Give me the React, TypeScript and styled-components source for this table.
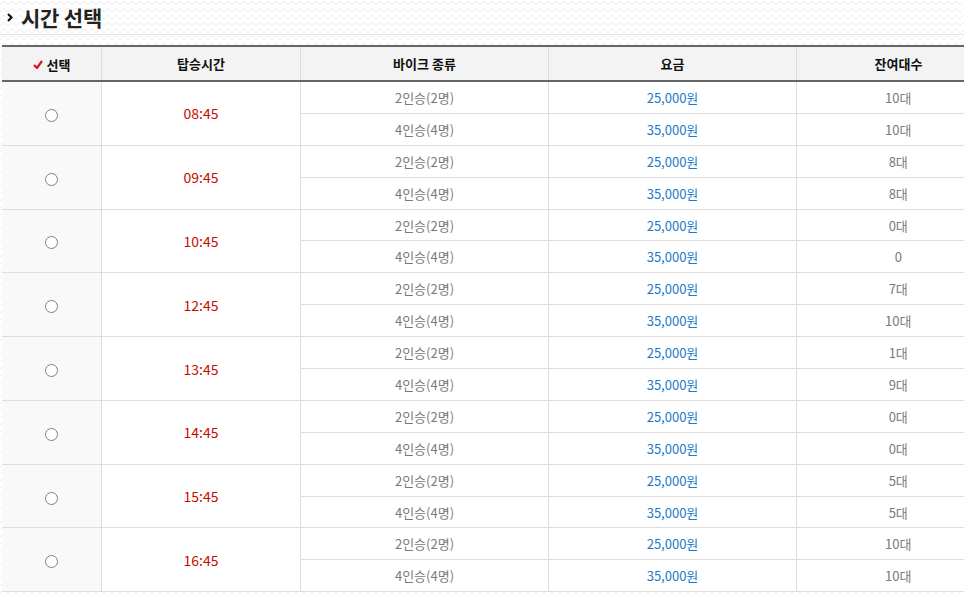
import React from "react";
import styled, { createGlobalStyle } from "styled-components";

const zig = encodeURIComponent(
  `<svg xmlns="http://www.w3.org/2000/svg" width="8" height="7"><path d="M0 5 L4 1 L8 5" fill="none" stroke="#ececec" stroke-width="1"/></svg>`
);

const Global = createGlobalStyle`
  html, body { margin: 0; padding: 0; }
  body {
    width: 964px; height: 594px; overflow: hidden;
    background: #fff url("data:image/svg+xml,${zig}") repeat;
    font-family: "Noto Sans CJK KR", "Noto Sans", sans-serif;
  }
`;

const Page = styled.div`
  display: flex;
  flex-direction: column;
  padding-left: 2px;
`;

const TitleBar = styled.div`
  display: flex;
  align-items: center;
  gap: 8px;
  height: 34px;
  margin-left: -2px;
  padding-left: 7px;
  border-bottom: 1px solid #e3e3e3;
`;

const Title = styled.h2`
  margin: 0;
  font-size: 21px;
  font-weight: 700;
  color: #222;
  line-height: 30px;
  letter-spacing: -0.2px;
`;

const Table = styled.table`
  margin-top: 10px;
  width: 994px;
  border-collapse: collapse;
  table-layout: fixed;
  border-top: 2px solid #666;
  background: #fff;
`;

const Th = styled.th<{ $w: number }>`
  width: ${(p) => p.$w}px;
  height: 33px;
  padding: 0;
  background: #f3f3f3;
  border-left: 1px solid #dcdcdc;
  border-bottom: 2px solid #666;
  font-size: 13px;
  font-weight: 700;
  color: #111;
  text-align: center;
  &:first-child { border-left: none; }
`;

const Td = styled.td<{ $tone?: "time" | "price" | "muted" | "select" }>`
  height: 30.9px;
  padding: 0;
  border: 1px solid #dedede;
  text-align: center;
  font-size: ${(p) => (p.$tone === "time" ? "14px" : "13px")};
  color: ${(p) =>
    p.$tone === "time" ? "#c80a00" : p.$tone === "price" ? "#1a7ac8" : "#7a7a7a"};
  background: ${(p) => (p.$tone === "select" ? "#f9f9f9" : "#fff")};
  &:first-child { border-left: none; }
`;

const Radio = styled.span`
  display: inline-block;
  width: 11px;
  height: 11px;
  border: 1px solid #808080;
  border-radius: 50%;
  background: #fff;
  vertical-align: middle;
`;

const HeadLabel = styled.span`
  display: inline-flex;
  align-items: center;
  gap: 4px;
`;

const Bullet = () => (
  <svg width="6" height="9" viewBox="0 0 6 9">
    <path d="M1 1 L4.5 4.5 L1 8" fill="none" stroke="#111" strokeWidth="2.2" />
  </svg>
);

const Check = () => (
  <svg width="10" height="9" viewBox="0 0 10 9">
    <path d="M1 5 L4 8 L9 1" fill="none" stroke="#e01020" strokeWidth="2.2" />
  </svg>
);

const data: [string, string, string][] = [
  ["08:45", "10대", "10대"],
  ["09:45", "8대", "8대"],
  ["10:45", "0대", "0"],
  ["12:45", "7대", "10대"],
  ["13:45", "1대", "9대"],
  ["14:45", "0대", "0대"],
  ["15:45", "5대", "5대"],
  ["16:45", "10대", "10대"],
];

export default function App() {
  return (
    <>
      <Global />
      <Page>
        <TitleBar>
          <Bullet />
          <Title>시간 선택</Title>
        </TitleBar>
        <Table>
          <thead>
            <tr>
              <Th $w={99}>
                <HeadLabel>
                  <Check />
                  선택
                </HeadLabel>
              </Th>
              <Th $w={198}>탑승시간</Th>
              <Th $w={247}>바이크 종류</Th>
              <Th $w={247}>요금</Th>
              <Th $w={203}>잔여대수</Th>
            </tr>
          </thead>
          <tbody>
            {data.map(([time, a, b]) => (
              <React.Fragment key={time}>
                <tr>
                  <Td rowSpan={2} $tone="select">
                    <Radio />
                  </Td>
                  <Td rowSpan={2} $tone="time">
                    {time}
                  </Td>
                  <Td>2인승(2명)</Td>
                  <Td $tone="price">25,000원</Td>
                  <Td>{a}</Td>
                </tr>
                <tr>
                  <Td>4인승(4명)</Td>
                  <Td $tone="price">35,000원</Td>
                  <Td>{b}</Td>
                </tr>
              </React.Fragment>
            ))}
          </tbody>
        </Table>
      </Page>
    </>
  );
}
